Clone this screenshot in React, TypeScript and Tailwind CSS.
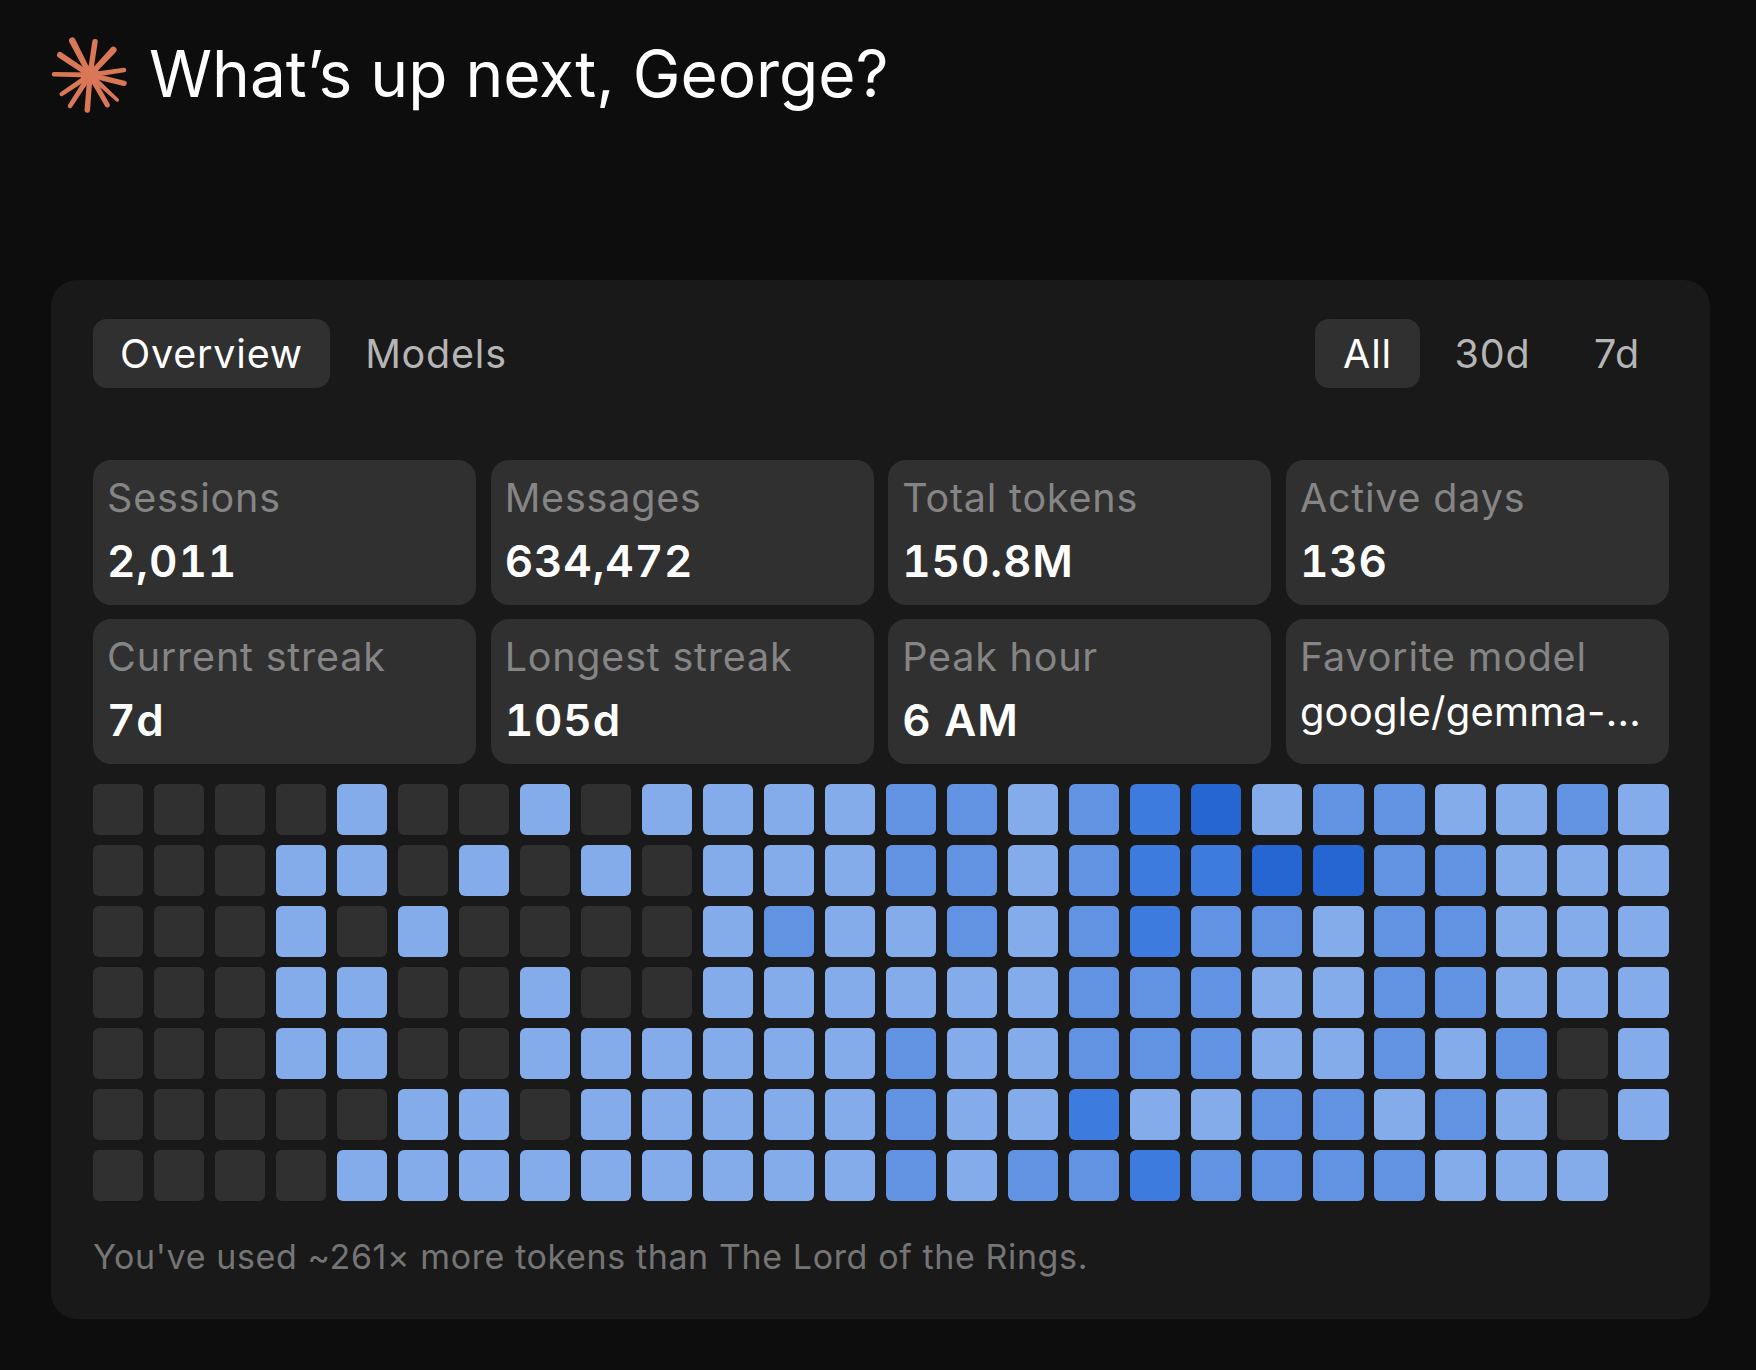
const stats = [
  { label: 'Sessions', value: '2,011' },
  { label: 'Messages', value: '634,472' },
  { label: 'Total tokens', value: '150.8M' },
  { label: 'Active days', value: '136' },
  { label: 'Current streak', value: '7d' },
  { label: 'Longest streak', value: '105d' },
  { label: 'Peak hour', value: '6 AM' },
];

// one string per weekday, one digit per week (x = no cell yet)
const heatmap = [
  '00001001011112212341221121',
  '00011010101112212334422111',
  '00010100001211212322122111',
  '00011001001111112221122111',
  '00011001111112112221121201',
  '00000110111112113112212101',
  '0000111111111212232222111x',
];

const cellColors: Record<string, string> = {
  '0': 'bg-[#303030]',
  '1': 'bg-[#84abea]',
  '2': 'bg-[#6292e2]',
  '3': 'bg-[#3d7bdf]',
  '4': 'bg-[#2566d2]',
  x: 'bg-transparent',
};

const rays: [number, number, number][] = [
  [22.3, 5.7, 6.5],
  [45, 6.7, 5.5],
  [63.3, 15, 6.5],
  [74, 35, 4.5],
  [74, 48.3, 5.5],
  [67.3, 65, 3.5],
  [57.3, 70, 5],
  [37.3, 75, 5.5],
  [20, 71, 4.5],
  [11.7, 59, 4.5],
  [4, 39.3, 4.5],
  [10, 20, 6],
];

function rayPath([x, y, w]: [number, number, number]) {
  const dx = x - 40;
  const dy = y - 40;
  const len = Math.hypot(dx, dy);
  const nx = -dy / len;
  const ny = dx / len;
  const r = w / 2;
  const b = 2.6;
  return `M${40 + nx * b} ${40 + ny * b}L${x + nx * r} ${y + ny * r}A${r} ${r} 0 0 0 ${x - nx * r} ${y - ny * r}L${40 - nx * b} ${40 - ny * b}Z`;
}

function Burst() {
  return (
    <svg width="80" height="80" viewBox="0 0 80 80" fill="#d97757" className="-ml-[1px] shrink-0">
      <circle cx="40" cy="40" r="9.5" />
      {rays.map((ray, i) => (
        <path key={i} d={rayPath(ray)} />
      ))}
    </svg>
  );
}

function Tab({ label, active, className }: { label: string; active?: boolean; className: string }) {
  return (
    <div
      className={`flex h-[69px] items-center justify-center rounded-[14px] pt-[3px] text-[39.5px] tracking-[0.02em] ${className} ${
        active ? 'bg-[#303030] text-white' : 'text-[#b5b5b5]'
      }`}
    >
      {label}
    </div>
  );
}

function StatCard({ label, children }: { label: string; children: React.ReactNode }) {
  return (
    <div className="h-[145px] rounded-[18px] bg-[#303030] pl-[14px] pt-[15px]">
      <div className="text-[39.5px] leading-[46px] tracking-[0.02em] text-[#858585]">{label}</div>
      {children}
    </div>
  );
}

export default function App() {
  return (
    <div className="min-h-screen bg-[#0d0d0d] pl-[51px] pr-[46px] pt-[35px] font-['Inter',sans-serif]">
      <div className="flex h-[80px] items-center gap-[19px]">
        <Burst />
        <h1 className="pb-[2px] text-[64px] font-normal text-white">What’s up next, George?</h1>
      </div>

      <div className="mt-[165px] rounded-[26px] bg-[#191919] pb-[41px] pl-[42px] pr-[41px] pt-[39px]">
        <div className="flex justify-between">
          <div className="flex">
            <Tab label="Overview" active className="w-[237px]" />
            <Tab label="Models" className="w-[212px]" />
          </div>
          <div className="flex">
            <Tab label="All" active className="w-[105px]" />
            <Tab label="30d" className="w-[145px]" />
            <Tab label="7d" className="w-[104px]" />
          </div>
        </div>

        <div className="mt-[72px] grid grid-cols-4 gap-x-[14.5px] gap-y-[14px]">
          {stats.map((s) => (
            <StatCard key={s.label} label={s.label}>
              <div className="mt-[15px] text-[44px] font-semibold leading-[50px] tracking-[0.02em] text-white tabular-nums">
                {s.value}
              </div>
            </StatCard>
          ))}
          <StatCard label="Favorite model">
            <div className="mt-[9px] text-[40px] leading-[46px] tracking-[0.005em] text-white">google/gemma-...</div>
          </StatCard>
        </div>

        <div className="-ml-[0.4px] mt-[20px] flex w-[1576px] flex-col gap-[10px]">
          {heatmap.map((row, r) => (
            <div key={r} className="grid grid-cols-[repeat(26,minmax(0,1fr))] gap-[10.52px]">
              {row.split('').map((level, c) => (
                <div key={c} className={`h-[51px] rounded-[6px] ${cellColors[level]}`} />
              ))}
            </div>
          ))}
        </div>

        <p className="mt-[35px] text-[34px] leading-[42px] tracking-[0.018em] text-[#757575]">
          You've used ~261× more tokens than The Lord of the Rings.
        </p>
      </div>
    </div>
  );
}
